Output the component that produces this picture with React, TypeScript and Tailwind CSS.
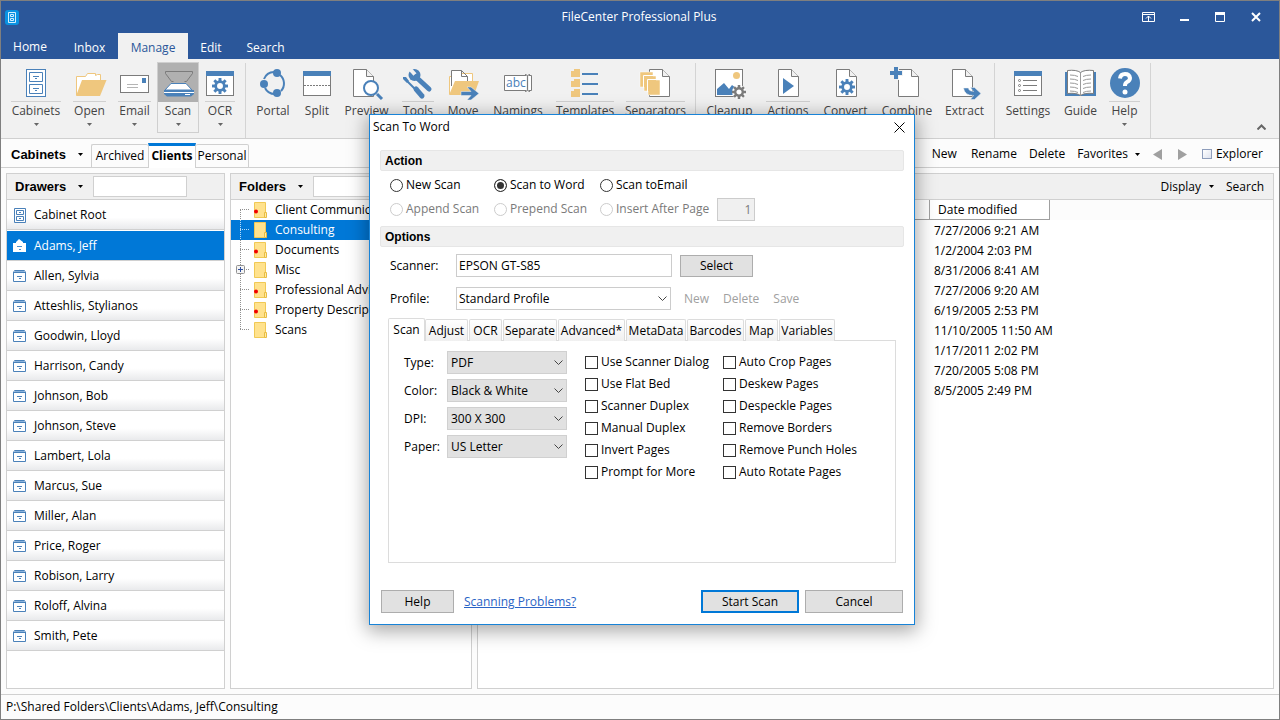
import type { ReactNode } from 'react'

const BLUE = '#4a81b9'
const GRAY = '#7b7b7b'
const TAN = '#efc77e'

const drawers = [
  'Adams, Jeff',
  'Allen, Sylvia',
  'Atteshlis, Stylianos',
  'Goodwin, Lloyd',
  'Harrison, Candy',
  'Johnson, Bob',
  'Johnson, Steve',
  'Lambert, Lola',
  'Marcus, Sue',
  'Miller, Alan',
  'Price, Roger',
  'Robison, Larry',
  'Roloff, Alvina',
  'Smith, Pete',
]

const folders = [
  { name: 'Client Communication', dot: true },
  { name: 'Consulting', selected: true },
  { name: 'Documents', dot: true },
  { name: 'Misc', expandable: true },
  { name: 'Professional Advisors', dot: true },
  { name: 'Property Descriptions', dot: true },
  { name: 'Scans' },
]

const dates = [
  '7/27/2006 9:21 AM',
  '1/2/2004 2:03 PM',
  '8/31/2006 8:41 AM',
  '7/27/2006 9:20 AM',
  '6/19/2005 2:53 PM',
  '11/10/2005 11:50 AM',
  '1/17/2011 2:02 PM',
  '7/20/2005 5:08 PM',
  '8/5/2005 2:49 PM',
]

const scanOptions = [
  'Use Scanner Dialog',
  'Use Flat Bed',
  'Scanner Duplex',
  'Manual Duplex',
  'Invert Pages',
  'Prompt for More',
]

const pageOptions = [
  'Auto Crop Pages',
  'Deskew Pages',
  'Despeckle Pages',
  'Remove Borders',
  'Remove Punch Holes',
  'Auto Rotate Pages',
]

function Icon({ children }: { children: ReactNode }) {
  return (
    <svg className="h-8 w-8 shrink-0 overflow-visible" viewBox="0 0 32 32" fill="none" aria-hidden="true">
      {children}
    </svg>
  )
}

function Gear({ x, y, r, color }: { x: number; y: number; r: number; color: string }) {
  return (
    <g transform={`translate(${x} ${y})`}>
      {[0, 45, 90, 135, 180, 225, 270, 315].map((angle) => (
        <rect
          key={angle}
          x={-r * 0.18}
          y={-r}
          width={r * 0.36}
          height={r * 0.45}
          fill={color}
          transform={`rotate(${angle})`}
        />
      ))}
      <circle r={r * 0.54} stroke={color} strokeWidth={r * 0.34} fill="none" />
    </g>
  )
}

function Page({ x }: { x: number }) {
  return (
    <g transform={`translate(${x} 0)`} stroke={GRAY} fill="#fff">
      <path d="M.5 2.5h13l7 7v20H.5z" />
      <path d="M13.5 2.5v7h7" fill="#f1f1f1" />
    </g>
  )
}

function WindowFrame() {
  return (
    <>
      <rect x="2.5" y="4.5" width="27" height="24" fill="#fff" stroke={GRAY} />
      <path fill={BLUE} d="M2 4h28v5H2z" />
    </>
  )
}

const icons: Record<string, ReactNode> = {
  Cabinets: (
    <Icon>
      <rect x="6.5" y="2.5" width="19" height="27" fill="#fff" stroke={BLUE} />
      <path d="M9.5 5.5h13v9h-13zM9.5 17.5h13v9h-13z" stroke={BLUE} />
      <path d="M13 9.500h6M13 21.500h6M15 11.500h2M15 23.500h2" stroke={BLUE} />
    </Icon>
  ),
  Open: (
    <Icon>
      <path d="M2.5 28V9.5h9l2-3h8v2l2-1h3V13" fill="#fff" stroke={TAN} />
      <path d="M8 13h24.500L26 29H2z" fill={TAN} />
    </Icon>
  ),
  Email: (
    <Icon>
      <rect x="1.5" y="8.5" width="28" height="17" fill="#fff" stroke={GRAY} />
      <path fill={BLUE} d="M23 11h4v5h-4z" />
      <path d="M8 17.500h11M8 20.500h11" stroke="#b5b5b5" />
    </Icon>
  ),
  Scan: (
    <Icon>
      <path d="M9.500 14.500L3.500 6.500v-2h27v2l-6 8h-2M9.500 14.500h2" stroke={GRAY} />
      <path d="M9 16.500h15l6 6.500H3z" fill="#fff" stroke={BLUE} />
      <path d="M2 23h30v4l-3 2.500H5L2 27z" fill={BLUE} />
      <path d="M2 25.500h30" stroke="#fff" />
      <path d="M23 27.500h5" stroke="#fff" />
    </Icon>
  ),
  OCR: (
    <Icon>
      <WindowFrame />
      <Gear x={16} y={19} r={8} color={BLUE} />
    </Icon>
  ),
  Portal: (
    <Icon>
      <path
        d="M7 12a11 11 0 0 1 10-7M23 8a11 11 0 0 1 1 16M18 27a11 11 0 0 1-10-6"
        stroke={BLUE}
        strokeWidth="2"
      />
      <circle cx="20" cy="6" r="4" fill={BLUE} />
      <circle cx="7" cy="17" r="4" fill={BLUE} />
      <circle cx="20" cy="26" r="4" fill={BLUE} />
    </Icon>
  ),
  Split: (
    <Icon>
      <WindowFrame />
      <path d="M3 18.500h26" stroke={GRAY} strokeDasharray="2 1" />
    </Icon>
  ),
  Preview: (
    <Icon>
      <Page x={2} />
      <path d="M26 27l5 5" stroke={BLUE} strokeWidth="3" />
      <circle cx="20" cy="21" r="7" fill="#fff" stroke={BLUE} strokeWidth="2" />
    </Icon>
  ),
  Tools: (
    <Icon>
      <circle cx="12.500" cy="8" r="6" fill={BLUE} />
      <path d="M7 1l6 6.500" stroke="#f1f1f1" strokeWidth="4" />
      <path d="M14 10l13 12" stroke={BLUE} strokeWidth="5" strokeLinecap="round" />
      <path d="M3 12l10 10" stroke={BLUE} strokeWidth="2" />
      <path d="M1 10l3 0 3 4-2 2-4-4z" fill={BLUE} />
      <path d="M14 22l6 7" stroke={BLUE} strokeWidth="5" strokeLinecap="round" />
    </Icon>
  ),
  Move: (
    <Icon>
      <path d="M2.500 27V9.500h3l2-3h18V15" fill="#fff" stroke={TAN} />
      <path d="M4.500 19V3.500h10l6 6V16M14.500 3.500v6h6" fill="#fff" stroke={GRAY} />
      <path d="M8 14h24l-5 14H2z" fill={TAN} />
      <path d="M14 24.500h10l-4-4.500h4l8 6.500-8 6.500h-4l4-4.500H14z" fill={BLUE} stroke="#f1f1f1" strokeWidth=".5" />
    </Icon>
  ),
  Namings: (
    <Icon>
      <path d="M24 8.500H2.500v15H24M27 8.500h2.500v15H27" fill="#fff" stroke={GRAY} />
      <text x="4" y="20" fontSize="12" fill={BLUE}>
        abc
      </text>
      <path
        d="M23 7.500q2.500 0 2.500 2v13q0 2-2.500 2M28 7.500q-2.500 0-2.500 2v13q0 2 2.500 2"
        stroke={GRAY}
      />
    </Icon>
  ),
  Templates: (
    <Icon>
      {[2, 12, 22].map((y) => (
        <g key={y} transform={`translate(0 ${y})`}>
          <path d="M2 2h3V0h6v8H2z" fill={TAN} />
          <path d="M13 5h16" stroke={BLUE} strokeWidth="2" />
        </g>
      ))}
    </Icon>
  ),
  Separators: (
    <Icon>
      <Page x={9} />
      <path d="M0 5h13v4h3v4h4v15H8v-4H4v-4H0z" fill={TAN} stroke="#fff" strokeWidth=".5" />
      <path d="M3.500 21V8.500H15M7.500 25V12.500H20" stroke="#fff" />
    </Icon>
  ),
  Cleanup: (
    <Icon>
      <rect x="1.5" y="2.5" width="27" height="27" fill="#fff" stroke={GRAY} />
      <circle cx="22.500" cy="8.500" r="3.500" fill={TAN} />
      <path d="M3 28v-6l7-6 5 6 3-4 4 3v7z" fill={BLUE} />
      <circle cx="25" cy="25" r="7" fill="#fff" />
      <Gear x={25} y={25} r={7} color={GRAY} />
    </Icon>
  ),
  Actions: (
    <Icon>
      <Page x={6} />
      <path d="M11 11l11 8-11 8z" fill={BLUE} />
    </Icon>
  ),
  Convert: (
    <Icon>
      <Page x={6} />
      <Gear x={17} y={20} r={8} color={BLUE} />
    </Icon>
  ),
  Combine: (
    <Icon>
      <Page x={7} />
      <path d="M-2 6h14M5-1v14" stroke="#f1f1f1" strokeWidth="6" />
      <path d="M-1 6h12M5 0v12" stroke={BLUE} strokeWidth="4" />
    </Icon>
  ),
  Extract: (
    <Icon>
      <Page x={3} />
      <path
        d="M14.500 21h5q0 3 5 3.500l-3-4h4l6.500 6-6.500 6h-4l3-4q-9 0-10-7.500z"
        fill={BLUE}
        stroke="#f1f1f1"
        strokeWidth=".5"
      />
    </Icon>
  ),
  Settings: (
    <Icon>
      <WindowFrame />
      {[13.5, 18.5, 23.5].map((y) => (
        <g key={y} stroke={GRAY}>
          <circle cx="7.500" cy={y} r="1" />
          <path d={`M11 ${y}h14`} />
        </g>
      ))}
    </Icon>
  ),
  Guide: (
    <Icon>
      <path d="M0 5h31v24H0z" fill={BLUE} />
      <path
        d="M2.500 3.500q9-1 13 2 4-3 13-2v23q-9-1-13 2-4-3-13-2z"
        fill="#fff"
        stroke={GRAY}
      />
      <path
        d="M15.500 5.500v23M5 8q5 0 8 1.500M5 12q5 0 8 1.500M5 16q5 0 8 1.500M5 20q5 0 8 1.500M5 24q5 0 8 1.500M26 8q-5 0-8 1.500M26 12q-5 0-8 1.500M26 16q-5 0-8 1.500M26 20q-5 0-8 1.500M26 24q-5 0-8 1.500"
        stroke="#9a9a9a"
      />
    </Icon>
  ),
  Help: (
    <Icon>
      <circle cx="16" cy="16" r="15" fill={BLUE} />
      <path
        d="M11 11.500q.500-4.500 5-4.500t5 4q0 2.500-3 4-2 1-2 4"
        stroke="#fff"
        strokeWidth="4"
      />
      <circle cx="16" cy="25" r="2.500" fill="#fff" />
    </Icon>
  ),
}

function RibbonButton({
  name,
  width,
  arrow,
  line,
  active,
}: {
  name: string
  width: string
  arrow?: boolean
  line?: boolean
  active?: boolean
}) {
  return (
    <button
      className={`flex h-[71px] flex-col items-center ${width} ${
        active ? 'border border-[#cfcfcf]' : 'px-1.5 pt-px'
      }`}
    >
      <span
        className={`flex w-full justify-center border-b pt-1 pb-0.5 ${
          active ? 'border-[#b0b0b0] bg-[#b0b0b0]' : line ? 'border-[#d0d0d0]' : 'border-transparent'
        }`}
      >
        {icons[name]}
      </span>
      <span className="mt-px leading-4 whitespace-nowrap">{name}</span>
      {arrow && <DownArrow className="mt-1 text-[#666]" />}
    </button>
  )
}

function DownArrow({ className = '' }: { className?: string }) {
  return (
    <svg className={`h-[3px] w-[5px] shrink-0 ${className}`} viewBox="0 0 5 3" aria-hidden="true">
      <path d="M0 0h5L2.500 3z" fill="currentColor" />
    </svg>
  )
}

function Separator() {
  return <div className="mt-px mr-[3px] ml-1 h-[75px] w-px bg-[#d4d4d4]"></div>
}

function DrawerIcon({ selected }: { selected?: boolean }) {
  return (
    <svg className="h-4 w-4 shrink-0" viewBox="0 0 16 16" fill="none" aria-hidden="true">
      {selected ? (
        <>
          <path d="M1 5h3V4l3-3 4 3v1h3v9H1z" fill="#fff" />
          <path d="M5 8.500h5M7 11.500h2" stroke="#4a8fd0" />
        </>
      ) : (
        <>
          <path d="M1.500 4.500l1-2h10l1 2v9h-12z" fill="#fff" stroke={BLUE} />
          <path d="M1 4.500h13" stroke={BLUE} />
          <path d="M3 3.500h9" stroke="#8db4dc" />
          <path d="M5 8.500h5M7 10.500h2" stroke={BLUE} />
        </>
      )}
    </svg>
  )
}

function CabinetIcon() {
  return (
    <svg className="h-4 w-4 shrink-0" viewBox="0 0 16 16" fill="none" aria-hidden="true">
      <path d="M2.500 1.500h11v14h-11z" fill="#fff" stroke={BLUE} />
      <path d="M4.500 3.500h7v4h-7zM4.500 9.500h7v4h-7zM7 5.500h2M7 11.500h2" stroke={BLUE} />
    </svg>
  )
}

function FolderIcon({ dot }: { dot?: boolean }) {
  return (
    <svg className="h-4 w-4 shrink-0" viewBox="0 0 16 16" aria-hidden="true">
      <path d="M1.500.5h11v15h-11z" fill="#ffe28d" stroke="#f0c955" />
      <path d="M11.500 10.500h2v5h-2z" fill="#ffe9a8" stroke="#e8bd42" />
      {dot && <circle cx="3" cy="9.500" r="2" fill="#f00000" />}
    </svg>
  )
}

function PanelHeader({ title }: { title: string }) {
  return (
    <div className="flex h-[26px] items-center border-b border-[#d0d0d0] bg-[#f0f0f0] px-2">
      <button className="flex items-center gap-3 text-[13px] font-bold [font-family:'Liberation_Sans',Arial,sans-serif]">
        {title}
        <DownArrow />
      </button>
      <input
        aria-label={`Filter ${title}`}
        className="ml-2.5 h-[21px] w-[94px] border border-[#d0d0d0] bg-white px-1"
      />
    </div>
  )
}

function Chevron() {
  return (
    <svg
      className="pointer-events-none absolute top-[9px] right-1 h-[6px] w-[9px]"
      viewBox="0 0 9 6"
      aria-hidden="true"
    >
      <path d="M.5.5l4 4 4-4" fill="none" stroke="#444" />
    </svg>
  )
}

function SelectRow({ id, label, value }: { id: string; label: string; value: string }) {
  return (
    <div className="flex items-center">
      <label htmlFor={id} className="w-[43px]">
        {label}
      </label>
      <div className="relative">
        <select
          id={id}
          className="block h-[23px] w-[120px] appearance-none border border-[#d0d0d0] bg-[#e1e1e1] pl-[3px]"
        >
          <option>{value}</option>
        </select>
        <Chevron />
      </div>
    </div>
  )
}

function Check({ label }: { label: string }) {
  return (
    <label className="flex h-[22px] items-center gap-[3px] whitespace-nowrap">
      <input
        type="checkbox"
        className="h-[13px] w-[13px] appearance-none border border-[#333] bg-white checked:bg-[#333]"
      />
      {label}
    </label>
  )
}

function Radio({
  label,
  checked,
  disabled,
}: {
  label: string
  checked?: boolean
  disabled?: boolean
}) {
  return (
    <label
      className={`flex h-6 items-center gap-[3px] whitespace-nowrap ${disabled ? 'text-[#7a7a7a]' : ''}`}
    >
      <input
        type="radio"
        name="action"
        defaultChecked={checked}
        disabled={disabled}
        className="h-[13px] w-[13px] appearance-none rounded-full border border-[#333] bg-white checked:bg-[#333] checked:shadow-[inset_0_0_0_2px_white] disabled:border-[#ccc]"
      />
      {label}
    </label>
  )
}

function SectionTitle({ children }: { children: ReactNode }) {
  return (
    <h2 className="h-[21px] rounded-xs border border-[#e6e6e6] bg-[#f0f0f0] px-1 text-xs leading-5 font-bold [font-family:'Liberation_Sans',Arial,sans-serif]">
      {children}
    </h2>
  )
}

function ScanDialog() {
  const tabs = [
    { name: 'Adjust', width: 'w-[43px]' },
    { name: 'OCR', width: 'w-[33px]' },
    { name: 'Separate', width: 'w-[54px]' },
    { name: 'Advanced*', width: 'w-[67px]' },
    { name: 'MetaData', width: 'w-[60px]' },
    { name: 'Barcodes', width: 'w-[57px]' },
    { name: 'Map', width: 'w-[33px]' },
    { name: 'Variables', width: 'w-[56px]' },
  ]

  return (
    <div
      role="dialog"
      aria-label="Scan To Word"
      className="absolute top-[113px] left-[368px] w-[546px] border border-[#1883d7] bg-white px-2.5 pb-[11px] shadow-[0_4px_18px_2px_rgba(0,0,0,0.35)]"
    >
      <div className="-mx-2.5 flex h-6 items-center justify-between pr-[9px] pl-[3px]">
        <span>Scan To Word</span>
        <button aria-label="Close">
          <svg className="h-[11px] w-[11px]" viewBox="0 0 11 11" aria-hidden="true">
            <path d="M.5.5l10 10M10.500.5l-10 10" stroke="#000" />
          </svg>
        </button>
      </div>

      <div className="mt-[11px]">
        <SectionTitle>Action</SectionTitle>
      </div>
      <div className="mt-0.5 grid grid-cols-[104px_106px_auto_1fr] items-center pl-2.5">
        <Radio label="New Scan" />
        <Radio label="Scan to Word" checked />
        <Radio label="Scan toEmail" />
        <span></span>
        <Radio label="Append Scan" disabled />
        <Radio label="Prepend Scan" disabled />
        <Radio label="Insert After Page" disabled />
        <input
          aria-label="Page number"
          defaultValue="1"
          disabled
          className="ml-2 h-[23px] w-[38px] border border-[#ccc] bg-[#f0f0f0] px-[3px] text-right text-[#7a7a7a]"
        />
      </div>

      <div className="mt-[5px]">
        <SectionTitle>Options</SectionTitle>
      </div>
      <div className="mt-[7px] flex items-center pl-2.5">
        <label htmlFor="scanner" className="w-[66px]">
          Scanner:
        </label>
        <input
          id="scanner"
          defaultValue="EPSON GT-S85"
          className="h-[23px] w-[216px] border border-[#ccc] px-0.5"
        />
        <button className="ml-2 h-[22px] w-[73px] border border-[#adadad] bg-[#e1e1e1]">
          Select
        </button>
      </div>
      <div className="mt-2.5 flex items-center pl-2.5">
        <label htmlFor="profile" className="w-[66px]">
          Profile:
        </label>
        <div className="relative">
          <select
            id="profile"
            className="block h-[23px] w-[215px] appearance-none border border-[#ccc] bg-white pl-0.5"
          >
            <option>Standard Profile</option>
          </select>
          <Chevron />
        </div>
        <div className="ml-[13px] flex gap-3.5 text-[#a0a0a0]">
          <button disabled>New</button>
          <button disabled>Delete</button>
          <button disabled>Save</button>
        </div>
      </div>

      <div role="tablist" className="mt-2 ml-2 flex h-[23px] items-end">
        <button
          role="tab"
          aria-selected="true"
          className="z-10 h-[23px] w-[37px] rounded-t-xs border border-b-0 border-[#dcdcdc] bg-white"
        >
          Scan
        </button>
        <div className="flex gap-px">
          {tabs.map((tab) => (
            <button
              key={tab.name}
              role="tab"
              className={`h-[22px] rounded-t-xs border border-b-0 border-[#dcdcdc] bg-linear-to-b from-white to-[#f0f0f0] whitespace-nowrap ${tab.width}`}
            >
              <span className="-mx-2">{tab.name}</span>
            </button>
          ))}
        </div>
      </div>
      <div className="-mt-px mr-2 ml-2 flex h-[223px] border border-[#dcdcdc] pl-[15px]">
        <div className="mt-2.5 flex flex-col gap-[5px]">
          <SelectRow id="type" label="Type:" value="PDF" />
          <SelectRow id="color" label="Color:" value="Black & White" />
          <SelectRow id="dpi" label="DPI:" value="300 X 300" />
          <SelectRow id="paper" label="Paper:" value="US Letter" />
        </div>
        <div className="mt-2.5 ml-[18px] w-[138px]">
          {scanOptions.map((option) => (
            <Check key={option} label={option} />
          ))}
        </div>
        <div className="mt-2.5">
          {pageOptions.map((option) => (
            <Check key={option} label={option} />
          ))}
        </div>
      </div>

      <div className="mt-[27px] flex items-center pl-px">
        <button className="h-[23px] w-[73px] border border-[#adadad] bg-[#e1e1e1]">Help</button>
        <a href="#" className="ml-2.5 text-[#2a63c5] underline">
          Scanning Problems?
        </a>
        <button className="ml-auto h-[23px] w-[98px] border-2 border-[#0078d7] bg-[#e1e1e1]">
          Start Scan
        </button>
        <button className="mr-px ml-1.5 h-[23px] w-[98px] border border-[#adadad] bg-[#e1e1e1]">
          Cancel
        </button>
      </div>
    </div>
  )
}

export default function App() {
  return (
    <div className="relative flex h-screen flex-col overflow-hidden border border-[#7f7f7f] bg-[#fcfcfc] text-xs text-black [font-family:'Open_Sans','Noto_Sans',sans-serif]">
      <header className="bg-[#2b579a] text-white">
        <div className="grid h-8 grid-cols-3 items-center pr-[5px] pl-[3px]">
          <svg className="h-4 w-4" viewBox="0 0 16 16" fill="none" aria-hidden="true">
            <rect x="1" y="1" width="14" height="15" rx="3" fill="#0a93e2" />
            <path d="M4.500 3.500h7v10h-7zM6.500 5.500h3v2h-3zM6.500 9.500h3v2h-3z" stroke="#d5efff" />
          </svg>
          <span className="text-center">FileCenter Professional Plus</span>
          <div className="flex justify-end">
            <button className="flex w-9 justify-center" aria-label="Ribbon display options">
              <svg className="h-3 w-[13px]" viewBox="0 0 13 12" fill="none" stroke="#fff" aria-hidden="true">
                <path d="M.5 1.500h12v9H.5zM0 3.500h13M6.500 10V5M4 7.500l2.500-2.500L9 7.500" />
              </svg>
            </button>
            <button className="flex w-9 justify-center" aria-label="Minimize">
              <svg className="h-3 w-[10px]" viewBox="0 0 10 12" aria-hidden="true">
                <path d="M1 8h9v2H1z" fill="#fff" />
              </svg>
            </button>
            <button className="flex w-9 justify-center" aria-label="Maximize">
              <svg className="h-3 w-[10px]" viewBox="0 0 10 12" fill="none" stroke="#fff" aria-hidden="true">
                <path d="M.5 1.500h9v9h-9z" />
                <path d="M0 2.500h10" strokeWidth="3" />
              </svg>
            </button>
            <button className="flex w-9 justify-center" aria-label="Close window">
              <svg className="h-3 w-[10px]" viewBox="0 0 10 12" stroke="#fff" aria-hidden="true">
                <path d="M1 2l8 8M9 2l-8 8" strokeWidth="2" />
              </svg>
            </button>
          </div>
        </div>
        <nav className="flex h-[26px]">
          <button className="w-[58px] pt-px">Home</button>
          <button className="ml-0.5 w-[57px] pt-[3px]">Inbox</button>
          <button className="w-[70px] bg-[#f1f1f1] pt-[3px] text-[#2b579a]">Manage</button>
          <button className="w-[46px] pt-[3px]">Edit</button>
          <button className="w-[63px] pt-[3px]">Search</button>
        </nav>
      </header>

      <div className="flex h-20 items-start border-b border-[#d0d0d0] bg-[#f1f1f1] pt-[3px] pl-1 text-[#444]">
        <RibbonButton name="Cabinets" width="w-[62px]" arrow line />
        <RibbonButton name="Open" width="w-[45px]" arrow line />
        <RibbonButton name="Email" width="w-[45px]" arrow line />
        <RibbonButton name="Scan" width="w-[42px]" arrow active />
        <RibbonButton name="OCR" width="w-[42px]" arrow line />
        <Separator />
        <RibbonButton name="Portal" width="w-[48px]" />
        <RibbonButton name="Split" width="w-[40px]" />
        <RibbonButton name="Preview" width="w-[59px]" />
        <RibbonButton name="Tools" width="w-[44px]" line />
        <RibbonButton name="Move" width="w-[46px]" />
        <RibbonButton name="Namings" width="w-[64px]" />
        <RibbonButton name="Templates" width="w-[70px]" line />
        <RibbonButton name="Separators" width="w-[71px]" line />
        <Separator />
        <RibbonButton name="Cleanup" width="w-[61px]" />
        <RibbonButton name="Actions" width="w-[56px]" line />
        <RibbonButton name="Convert" width="w-[59px]" />
        <RibbonButton name="Combine" width="w-[64px]" />
        <RibbonButton name="Extract" width="w-[51px]" />
        <Separator />
        <RibbonButton name="Settings" width="w-[60px]" />
        <RibbonButton name="Guide" width="w-[45px]" />
        <RibbonButton name="Help" width="w-[43px]" arrow line />
        <Separator />
        <button className="mr-[13px] mb-2 ml-auto self-end" aria-label="Collapse ribbon">
          <svg className="h-[6px] w-[9px]" viewBox="0 0 9 6" aria-hidden="true">
            <path d="M.5 5.500l4-4 4 4" fill="none" stroke="#666" strokeWidth="2" />
          </svg>
        </button>
      </div>

      <div className="flex h-[29px] items-end justify-between">
        <div className="flex h-full flex-1 items-end">
          <button className="flex h-full w-[90px] items-center gap-3 border-b border-[#d0d0d0] pt-[3px] pl-2.5 text-[13px] font-bold [font-family:'Liberation_Sans',Arial,sans-serif]">
            Cabinets
            <DownArrow />
          </button>
          <button className="h-6 w-[57px] rounded-t-xs border border-r-0 border-[#d0d0d0]">
            Archived
          </button>
          <button className="h-[25px] w-12 border-t-3 border-r border-l border-t-[#0078d7] border-r-[#d0d0d0] border-l-[#d0d0d0] bg-white pb-0.5 font-bold">
            <span className="-mx-2">Clients</span>
          </button>
          <button className="h-6 w-[53px] rounded-t-xs border border-l-0 border-[#d0d0d0]">
            <span className="-mx-2">Personal</span>
          </button>
          <div className="h-full flex-1 border-b border-[#d0d0d0]"></div>
        </div>
        <div className="flex h-full items-center border-b border-[#d0d0d0] pt-0.5 pr-4">
          <button>New</button>
          <button className="ml-3.5">Rename</button>
          <button className="ml-3">Delete</button>
          <button className="ml-3 flex items-center gap-[7px]">
            Favorites
            <DownArrow />
          </button>
          <button className="ml-[13px]" aria-label="Back">
            <svg className="h-[11px] w-[9px]" viewBox="0 0 9 11" aria-hidden="true">
              <path d="M9 0v11L0 5.500z" fill="#a0a0a0" />
            </svg>
          </button>
          <button className="ml-4" aria-label="Forward">
            <svg className="h-[11px] w-[9px]" viewBox="0 0 9 11" aria-hidden="true">
              <path d="M0 0v11l9-5.500z" fill="#a0a0a0" />
            </svg>
          </button>
          <label className="ml-[15px] flex items-center gap-1">
            <input
              type="checkbox"
              className="h-[10px] w-[10px] appearance-none border border-[#8e9dbb] bg-linear-to-br from-white to-[#dde2ee]"
            />
            Explorer
          </label>
        </div>
      </div>

      <main className="flex min-h-0 flex-1 gap-[5px] px-[5px] py-[5px]">
        <section className="w-[219px] shrink-0 border border-[#d0d0d0] bg-white">
          <PanelHeader title="Drawers" />
          <ul>
            <li className="mb-px flex h-[30px] items-center gap-1.5 border-b border-[#d0d0d0] bg-linear-to-b from-white from-60% to-[#e9eaec] pl-[5px]">
              <CabinetIcon />
              <span>Cabinet Root</span>
            </li>
            {drawers.map((name, i) => (
              <li
                key={name}
                className={`flex h-[30px] items-center gap-1.5 border-b border-[#d0d0d0] pl-[5px] ${
                  i == 0
                    ? 'bg-[#0078d7] text-white'
                    : 'bg-linear-to-b from-white from-60% to-[#e9eaec]'
                }`}
              >
                <DrawerIcon selected={i == 0} />
                <span>{name}</span>
              </li>
            ))}
          </ul>
        </section>

        <section className="w-[242px] shrink-0 border border-[#d0d0d0] bg-white">
          <PanelHeader title="Folders" />
          <ul>
            {folders.map((folder, i) => (
              <li
                key={folder.name}
                className={`flex h-5 items-center whitespace-nowrap ${
                  folder.selected ? 'bg-[#0078d7] text-white' : ''
                }`}
              >
                <svg className="h-5 w-[22px] shrink-0" viewBox="0 0 22 20" fill="none" aria-hidden="true">
                  <path
                    d={`M9.500 ${i == 0 ? 10 : 0}V${i == folders.length - 1 ? 10 : 20}M9 9.500h10`}
                    stroke={folder.selected ? '#b9dcf8' : '#909090'}
                    strokeDasharray="1 1"
                  />
                  {folder.expandable && (
                    <>
                      <rect x="5.500" y="5.500" width="8" height="8" rx="1" fill="#f4f4f4" stroke="#919191" />
                      <path d="M7 9.500h5M9.500 7v5" stroke="#2f4f9f" />
                    </>
                  )}
                </svg>
                <FolderIcon dot={folder.dot} />
                <span className="pl-1.5">{folder.name}</span>
              </li>
            ))}
          </ul>
        </section>

        <section className="min-w-0 flex-1 border border-[#d0d0d0] bg-white">
          <div className="flex h-[26px] items-center justify-end border-b border-[#d0d0d0] bg-[#f0f0f0] pr-[9px]">
            <button className="flex items-center gap-2">
              Display
              <DownArrow />
            </button>
            <button className="ml-3">Search</button>
          </div>
          <div className="bg-[#fcfcfc]">
            <table className="w-[572px] table-fixed border-separate border-spacing-0 text-left">
              <thead>
                <tr className="h-[19px]">
                  <th className="w-[452px] border-r border-b border-[#a0a0a0] bg-white p-0"></th>
                  <th className="border-r border-b border-[#a0a0a0] bg-white p-0 pt-px pl-2 leading-[18px] font-normal">
                    Date modified
                  </th>
                </tr>
              </thead>
            </table>
          </div>
          <table className="mt-px w-[572px] table-fixed text-left" aria-label="Files">
            <tbody>
              {dates.map((date) => (
                <tr key={date} className="h-5">
                  <td className="w-[452px] p-0"></td>
                  <td className="p-0 pl-1 whitespace-nowrap">{date}</td>
                </tr>
              ))}
            </tbody>
          </table>
        </section>
      </main>

      <footer className="flex h-[25px] items-center border-t border-[#d0d0d0] px-[5px]">
        P:\Shared Folders\Clients\Adams, Jeff\Consulting
      </footer>

      <ScanDialog />
    </div>
  )
}
